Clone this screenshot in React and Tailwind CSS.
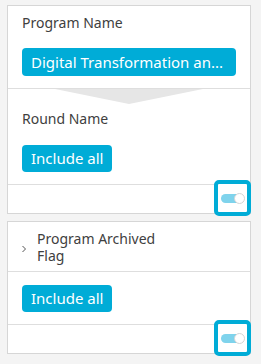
import React from "react";

const font = { fontFamily: '"Noto Sans", "Open Sans", sans-serif' };

// small switch with the blue focus ring round it
function FocusToggle({ top }) {
  return (
    <div
      className={`absolute ${top} right-[-1px] w-[37px] h-[36px] rounded-[5px] border-[4px] border-[#00acd7] bg-white flex items-center`}
    >
      <div className="relative ml-[3px] w-[20px] h-[9px] rounded-full bg-[#7fd3ec]">
        <div className="absolute right-[-4px] top-[-1px] w-[11px] h-[11px] rounded-full bg-white border border-[#d4d4d4]" />
      </div>
    </div>
  );
}

function Pill({ children, className = "" }) {
  return (
    <div
      className={`inline-flex items-center h-[27px] rounded-[4px] bg-[#00acd7] text-white text-[15px] px-[9px] ${className}`}
    >
      {children}
    </div>
  );
}

export default function App() {
  return (
    <div
      className="w-[261px] h-[364px] bg-[#f4f4f4] pt-[5px] pl-[7px] text-[#404040]"
      style={font}
    >
      {/* Card 1 */}
      <div className="w-[244px] bg-white border border-[#d6d6d6]">
        <div className="px-[14px] pt-[7px] pb-[12px]">
          <div className="text-[14px] leading-[20px]">Program Name</div>
          <Pill className="mt-[15px] w-[214px] h-[28px]">
            Digital Transformation an...
          </Pill>
        </div>

        <div className="relative border-t border-[#dedede] px-[14px] pt-[20px] pb-[12px]">
          <svg
            className="absolute left-[47px] top-0"
            width="150"
            height="16"
            viewBox="0 0 150 16"
          >
            <polygon points="0,0 148,0 74,15" fill="#e6e6e6" />
          </svg>
          <div className="relative text-[14px] leading-[20px]">Round Name</div>
          <Pill className="mt-[16px]">Include all</Pill>
        </div>

        <div className="relative border-t border-[#dedede] h-[29px]">
          <FocusToggle top="top-[-5px]" />
        </div>
      </div>

      {/* Card 2 */}
      <div className="w-[244px] mt-[7px] bg-white border border-[#d6d6d6]">
        <div className="flex items-center pl-[13px] pt-[8px] pb-[7px]">
          <svg width="6" height="8" viewBox="0 0 6 8" className="mt-[4px]">
            <path d="M1.5 1 L4.5 4 L1.5 7" fill="none" stroke="#555" strokeWidth="1" />
          </svg>
          <div className="ml-[10px] w-[130px] text-[14px] leading-[17px]">
            Program Archived Flag
          </div>
        </div>

        <div className="border-t border-[#dedede] px-[14px] pt-[13px] pb-[12px]">
          <Pill>Include all</Pill>
        </div>

        <div className="relative border-t border-[#dedede] h-[29px]">
          <FocusToggle top="top-[-5px]" />
        </div>
      </div>
    </div>
  );
}
